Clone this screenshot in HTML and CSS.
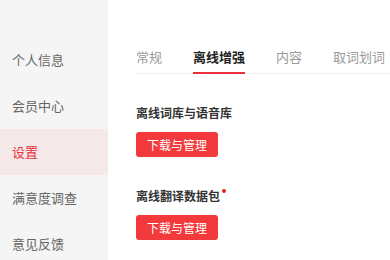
FILE: index.html
```html
<!DOCTYPE html>
<html>
<head>
<meta charset="utf-8">
<link rel="stylesheet" href="styles.css">
</head>
<body>
<div class="app">
  <nav class="sidebar">
    <div class="side-item">个人信息</div>
    <div class="side-item">会员中心</div>
    <div class="side-item active">设置</div>
    <div class="side-item">满意度调查</div>
    <div class="side-item">意见反馈</div>
  </nav>
  <main class="main">
    <div class="tabs">
      <div class="tab">常规</div>
      <div class="tab active">离线增强</div>
      <div class="tab">内容</div>
      <div class="tab">取词划词</div>
    </div>
    <section class="section first">
      <div class="title">离线词库与语音库</div>
      <button class="btn">下载与管理</button>
    </section>
    <section class="section">
      <div class="title">离线翻译数据包<span class="dot"></span></div>
      <button class="btn">下载与管理</button>
    </section>
  </main>
</div>
</body>
</html>
```
FILE: styles.css
```css
html, body {
  margin: 0;
  padding: 0;
  background: #fff;
  font-family: "Noto Sans CJK SC", "Noto Sans", sans-serif;
}
.app {
  display: flex;
  width: 390px;
  height: 260px;
  overflow: hidden;
}
.sidebar {
  width: 108px;
  flex: none;
  background: #f5f5f5;
  padding-top: 37px;
  box-sizing: border-box;
}
.side-item {
  height: 46px;
  line-height: 46px;
  padding-left: 12px;
  font-size: 13px;
  color: #666;
}
.side-item.active {
  background: #f5e8e8;
  color: #e8323c;
}
.main {
  flex: 1;
  padding-left: 28px;
  padding-top: 47px;
  min-width: 0;
}
.tabs {
  display: flex;
  gap: 31px;
  border-bottom: 1px solid #eeeeee;
  white-space: nowrap;
}
.tab {
  font-size: 13px;
  line-height: 20px;
  color: #999;
  padding-bottom: 5px;
  border-bottom: 2px solid transparent;
  margin-bottom: -1px;
  flex: none;
}
.tab.active {
  color: #222;
  font-weight: bold;
  border-bottom-color: #e8323c;
}
.section {
  margin-top: 30px;
  line-height: 0;
}
.section.first {
  margin-top: 30px;
}
.title {
  display: block;
  font-size: 12px;
  line-height: 18px;
  height: 18px;
  font-weight: bold;
  color: #333;
}
.dot {
  display: inline-block;
  vertical-align: top;
  margin-left: 2px;
  margin-top: 2px;
  width: 4px;
  height: 4px;
  border-radius: 50%;
  background: #e8202a;
}
.btn {
  display: block;
  margin-top: 10px;
  height: 25px;
  width: 82px;
  padding: 0;
  border: none;
  border-radius: 3px;
  background: #f23a3c;
  color: #fff;
  font-family: inherit;
  font-size: 12px;
  line-height: 25px;
}
```
